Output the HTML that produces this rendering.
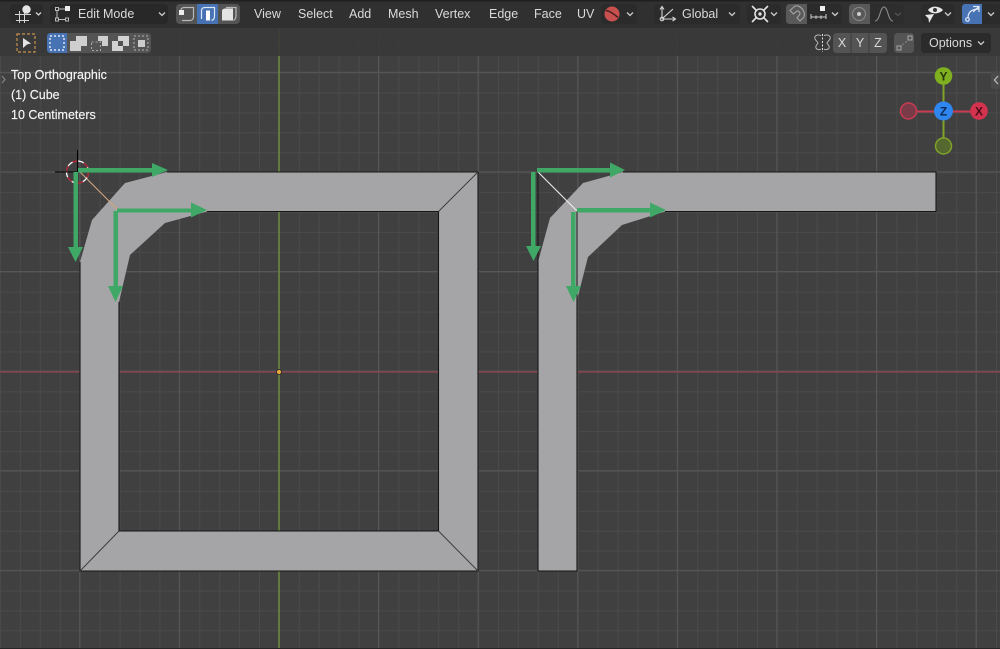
<!DOCTYPE html>
<html><head><meta charset="utf-8"><style>
html,body{margin:0;padding:0;background:#404040;width:1000px;height:649px;overflow:hidden}
svg{display:block;filter:blur(.3px)}
text{font-family:"Liberation Sans",sans-serif;font-size:12.5px;fill:#dadada}
text.ov{fill:#f6f6f6;stroke:#f6f6f6;stroke-width:.15px}
</style></head><body>
<svg width="1000" height="649" viewBox="0 0 1000 649" xmlns="http://www.w3.org/2000/svg">
<defs>
<pattern id="g1" patternUnits="userSpaceOnUse" x="0" y="12.8" width="19.92" height="19.92"><path d="M.5 0V19.92M0 .5H19.92" stroke="#4a4a4a" stroke-width="1" fill="none"/></pattern>
<pattern id="g2" patternUnits="userSpaceOnUse" x="79.2" y="71.8" width="99.6" height="99.6"><path d="M.5 0V99.6M0 .5H99.6" stroke="#575757" stroke-width="1" fill="none"/></pattern>
</defs>
<rect width="1000" height="649" fill="#404040"/>
<rect width="1000" height="649" fill="url(#g1)"/>
<rect width="1000" height="649" fill="url(#g2)"/>
<path d="M0 372H1000" stroke="#93424f" stroke-width="1.300"/>
<path d="M279 28V649" stroke="#6f8f3c" stroke-width="1.400"/>
<rect y="648" width="1000" height="1" fill="#262626"/>

<!-- meshes -->
<path d="M80 571H478V172H167L125 183L92 220L80 262ZM119 531V302L130 255L165 223L207 211.500H438.500V531Z" fill="#a5a5a7" fill-rule="evenodd"/>
<path d="M538 571H577V300L588 257L622 225L665 211.500H936V172H623L583 183L550 218L538 262Z" fill="#a5a5a7"/>
<path d="M167 172H478V571H80V262M119 302V531H438.500V211.500H207" fill="none" stroke="#151515" stroke-width="1.100"/>
<path d="M478 172L438.500 211.500M478 571L438.500 531M80 571L119 531" stroke="#3a3a3a" stroke-width=".9" fill="none"/>
<path d="M623 172H936V211.500H665M577 300V571H538V262" fill="none" stroke="#151515" stroke-width="1.100"/>
<path d="M538 172V262M577 211V300" stroke="#151515" stroke-width="1"/>
<path d="M538 172H623" stroke="#777" stroke-width="1"/>
<path d="M80 172L119 211" stroke="#d3a57c" stroke-width="1.100"/>
<path d="M538 172L577 211" stroke="#eee" stroke-width="1.100"/>

<!-- cursor -->
<circle cx="77.500" cy="172" r="11" fill="none" stroke="#fff" stroke-width="1.300"/>
<circle cx="77.500" cy="172" r="11" fill="none" stroke="#a81c2e" stroke-width="1.400" stroke-dasharray="5.800 5.800"/>
<path d="M77.500 150V195M55 172H88" stroke="#000" stroke-width="1"/>

<!-- arrows -->
<g fill="#3fa866">
<path d="M78 168H152V163L168 170L152 177V172.500H78Z"/>
<path d="M73.500 172H78V247H83L75.500 262L68 247H73.500Z"/>
<path d="M117 208.500H191V202.500L207 210L191 217.500V212.500H117Z"/>
<path d="M113.500 211H118V286H123L115.500 302L108 286H113.500Z"/>
<path d="M537 168H610V162.500L625 170L610 177.500V172.500H537Z"/>
<path d="M531 172H535.500V246H541L533.500 261L526 246H531Z"/>
<path d="M577 208H650V202.500L666 210L650 217.500V212.500H577Z"/>
<path d="M571 212H575.500V286H581L573.500 302L566 286H571Z"/>
</g>

<!-- origin -->
<circle cx="279" cy="372" r="2.500" fill="#e8a93f" stroke="#222" stroke-width=".8"/>

<!-- headers -->
<rect y="28" width="1000" height="28" fill="#383838" fill-opacity=".88"/>
<rect y="0" width="1000" height="28" fill="#303030"/>
<rect y="0" width="1000" height="1.500" fill="#1f1f1f"/>

<!-- top left -->
<rect x="10" y="4" width="33" height="20" rx="3.500" fill="#2a2a2a"/>
<g stroke="#d5d5d5" stroke-width="1" fill="none"><path d="M15 14.500H31M16 20.500H29M19.500 11V23M24.500 11V23"/><path d="M36 12.500L38.500 15L41 12.500" stroke-width="1.300"/></g>
<circle cx="26.500" cy="9.500" r="4.200" fill="#e6e6e6"/>
<rect x="50" y="4" width="118" height="20" rx="3.500" fill="#282828"/>
<g stroke="#bbb" stroke-width="1" fill="none"><rect x="55.500" y="7.500" width="3" height="3"/><rect x="55.500" y="18" width="3" height="3"/><rect x="65.500" y="18" width="3" height="3"/><path d="M59 9H65M57 11V18M59 19.500H65"/></g>
<rect x="65" y="6" width="5" height="5" fill="#eee"/>
<text x="78" y="18">Edit Mode</text>
<path d="M159 12.500L162 15.500L165 12.500" stroke="#ccc" stroke-width="1.300" fill="none"/>

<!-- select mode -->
<rect x="176" y="4" width="64" height="20" rx="4" fill="#545454"/>
<rect x="197" y="4" width="21" height="20" fill="#4772b3"/>
<g fill="none" stroke="#b8b8b8" stroke-width="1.200">
<path d="M181 10C181 8 183 7.500 185 7.500H193.500V17C193.500 19 192 20.500 190 20.500H182"/>
<path d="M201.500 19V10.500C201.500 8.500 203 7.500 205 7.500H214.500V16C214.500 18 213.500 20 211.500 20.500" stroke="#dce6f5"/>
<path d="M226 7.500H236V16C236 18 235 19.500 233.500 20.500"/>
</g>
<rect x="179" y="10" width="5" height="5" fill="#eee"/>
<rect x="206" y="10.500" width="4" height="10" fill="#fff"/>
<path d="M222 11C222 9 224 8.500 226 8.500H233V20.500H222Z" fill="#e4e4e4"/>

<text x="254" y="18">View</text>
<text x="298" y="18">Select</text>
<text x="349" y="18">Add</text>
<text x="388" y="18">Mesh</text>
<text x="435" y="18">Vertex</text>
<text x="489" y="18">Edge</text>
<text x="534" y="18">Face</text>
<text x="577" y="18">UV</text>

<rect x="601" y="4" width="36" height="20" rx="3.500" fill="#2b2b2b"/>
<circle cx="612" cy="14" r="7.500" fill="#c8504f"/>
<path d="M606 10.500C610 11 614 14 618 17.500" stroke="#4a2020" stroke-width="1.500" fill="none"/>
<path d="M627 12.500L630 15.500L633 12.500" stroke="#ccc" stroke-width="1.300" fill="none"/>

<!-- transform orientation -->
<rect x="654" y="4" width="86" height="20" rx="3.500" fill="#2b2b2b"/>
<g fill="none" stroke="#d5d5d5" stroke-width="1.100"><path d="M662 7V19H675M660 9.500L662 6.500L664 9.500M672.500 17L675.500 19L672.500 21M663 18L673 9"/><circle cx="662" cy="19" r="1.800"/></g>
<text x="682" y="18">Global</text>
<path d="M729 12.500L732 15.500L735 12.500" stroke="#ccc" stroke-width="1.300" fill="none"/>

<!-- pivot -->
<rect x="747" y="4" width="34" height="20" rx="3.500" fill="#2b2b2b"/>
<g fill="none" stroke="#e0e0e0" stroke-width="1.600"><circle cx="760" cy="14" r="5"/><path d="M752 6L756.500 10.500M768 6L763.500 10.500M752 22L756.500 17.500M768 22L763.500 17.500"/></g>
<circle cx="760" cy="14" r="1.700" fill="#ddd"/>
<path d="M771 12.500L774 15.500L777 12.500" stroke="#ccc" stroke-width="1.300" fill="none"/>

<!-- snap -->
<rect x="786" y="4" width="56" height="20" rx="3.500" fill="#2b2b2b"/>
<path d="M786 7.500A3.500 3.500 0 0 1 789.500 4H807V24H789.500A3.500 3.500 0 0 1 786 20.500Z" fill="#595959"/>
<path d="M790 10.500L795 6C800 5 806 11 804 17L800 21L797 18L800 14C800 12 798.500 10.500 797 11L793.500 14Z" fill="none" stroke="#a5a5a5" stroke-width="1.100"/>
<path d="M811 14V19M816 15.500V19M821 15.500V19M826 14V19M811 17H826" stroke="#ccc" stroke-width="1" fill="none"/>
<rect x="820" y="6" width="5" height="5" fill="#eee"/>
<path d="M832 12.500L835 15.500L838 12.500" stroke="#ccc" stroke-width="1.300" fill="none"/>

<!-- proportional -->
<rect x="849" y="4" width="55" height="20" rx="3.500" fill="#2d2d2d"/>
<path d="M849 7.500A3.500 3.500 0 0 1 852.500 4H870V24H852.500A3.500 3.500 0 0 1 849 20.500Z" fill="#595959"/>
<circle cx="859" cy="14" r="6.500" fill="none" stroke="#8a8a8a" stroke-width="1"/>
<circle cx="859" cy="14" r="2" fill="#cfcfcf"/>
<path d="M875 21C880 21 880 7 884 7C888 7 888 21 893 21" fill="none" stroke="#8a8a8a" stroke-width="1.100"/>
<path d="M895 13L898 15.500L901 13" stroke="#555" stroke-width="1.200" fill="none"/>

<!-- overlays -->
<rect x="921" y="4" width="34" height="20" rx="3.500" fill="#2b2b2b"/>
<path d="M928 10C931 5.500 939 5.500 943 10C939 14.500 931 14.500 928 10Z" fill="#e8e8e8"/>
<circle cx="935" cy="10" r="2" fill="#333"/>
<path d="M925 15L934 14L929 23L928.500 18.500Z" fill="#e8e8e8"/>
<path d="M945 12.500L948 15.500L951 12.500" stroke="#ccc" stroke-width="1.300" fill="none"/>

<rect x="962" y="4" width="38" height="20" rx="3" fill="#2b2b2b"/>
<path d="M962 7A3 3 0 0 1 965 4H982V24H965A3 3 0 0 1 962 21Z" fill="#4772b3"/>
<g fill="none" stroke="#dfe8f5" stroke-width="1.200"><path d="M968 18C968 12 972 9 979 9"/><path d="M973 6.500H979V12M979 6.500L973 12"/><circle cx="967.500" cy="19.500" r="1.800"/></g>
<path d="M988 12.500L991 15.500L994 12.500" stroke="#ccc" stroke-width="1.300" fill="none"/>

<!-- tool header -->
<rect x="17" y="34" width="18" height="18" fill="none" stroke="#c9914a" stroke-width="1.200" stroke-dasharray="3 2"/>
<path d="M23 38L31 43.500L27 44.500L23 48Z" fill="#e4e4e4"/>

<rect x="47" y="33" width="104" height="20" rx="3.500" fill="#545454"/>
<path d="M47 36.500A3.500 3.500 0 0 1 50.500 33H67V53H50.500A3.500 3.500 0 0 1 47 49.500Z" fill="#4772b3"/>
<rect x="50" y="36" width="14" height="14" fill="none" stroke="#fff" stroke-width="1.200" stroke-dasharray="2 2"/>
<path d="M70 41H76V36H87V46H81V51H70Z" fill="#cfcfcf"/>
<path d="M98 36H108V46H102V41H98Z" fill="#cfcfcf"/>
<rect x="91.500" y="42" width="9" height="8.500" fill="none" stroke="#aaa" stroke-width="1" stroke-dasharray="2 2"/>
<path fill-rule="evenodd" d="M118 36H129V46H123V51H112V41H118ZM118 41V46H123V41Z" fill="#d2d2d2"/>
<rect x="134" y="36" width="14" height="14" fill="none" stroke="#b5b5b5" stroke-width="1" stroke-dasharray="2 2"/>
<rect x="138" y="40" width="7" height="7" fill="#ccc"/>

<!-- mirror -->
<g fill="none" stroke="#b5b5b5" stroke-width="1"><path d="M821 35.500C817 34 814 36 815 39C816 41 818 42 818 43C817 45 815 46 816 48C817 50 820 50 821 49M824 35.500C828 34 831 36 830 39C829 41 827 42 827 43C828 45 830 46 829 48C828 50 825 50 824 49"/><path d="M822.500 34V52" stroke="#e0e0e0" stroke-dasharray="2 1.500"/></g>
<rect x="833" y="33" width="54" height="20" rx="3.500" fill="#545454"/>
<path d="M851 33V53M869 33V53" stroke="#3b3b3b" stroke-width="1"/>
<text x="842" y="47" text-anchor="middle">X</text>
<text x="860" y="47" text-anchor="middle">Y</text>
<text x="878" y="47" text-anchor="middle">Z</text>
<rect x="894" y="33" width="20" height="20" rx="3.500" fill="#545454"/>
<rect x="897" y="46" width="4" height="4" fill="none" stroke="#a8a8a8"/>
<rect x="908" y="36" width="4" height="4" fill="none" stroke="#a8a8a8"/>
<path d="M902 45L907 41" stroke="#8a8a8a" stroke-dasharray="2 2"/>
<rect x="921" y="33" width="70" height="20" rx="3.500" fill="#2b2b2b"/>
<text x="929" y="47">Options</text>
<path d="M978 41.500L981 44.500L984 41.500" stroke="#ccc" stroke-width="1.300" fill="none"/>

<!-- overlay text -->
<text class="ov" x="11" y="79">Top Orthographic</text>
<text class="ov" x="11" y="99">(1) Cube</text>
<text class="ov" x="11" y="119">10 Centimeters</text>

<!-- region toggles -->
<path d="M2 76L5 79.500L2 83" stroke="#888" stroke-width="1.100" fill="none"/>
<rect x="991" y="71" width="9" height="18" rx="3" fill="#4a4a4a"/>
<path d="M998 76L994.500 80L998 84" stroke="#bbb" stroke-width="1.300" fill="none"/>

<!-- gizmo -->
<path d="M943.500 84V138" stroke="#7fa32a" stroke-width="2"/>
<path d="M916 111.500H972" stroke="#c93b52" stroke-width="2"/>
<circle cx="943.500" cy="76" r="8.800" fill="#7fb01f"/>
<circle cx="943.500" cy="146" r="8" fill="#55682f" stroke="#7fa32a" stroke-width="1.500"/>
<circle cx="908.500" cy="111" r="8" fill="#7a3b48" stroke="#c93b52" stroke-width="1.500"/>
<circle cx="979" cy="111" r="8.800" fill="#d3334f"/>
<circle cx="943.500" cy="111" r="9.500" fill="#2f86ee"/>
<g text-anchor="middle">
<text x="943.500" y="80.500" style="fill:#26380a;font-size:12px;font-weight:bold">Y</text>
<text x="979" y="115.500" style="fill:#4a0d18;font-size:12px;font-weight:bold">X</text>
<text x="943.500" y="115.500" style="fill:#0a2a55;font-size:12px;font-weight:bold">Z</text>
</g>
</svg>
</body></html>
